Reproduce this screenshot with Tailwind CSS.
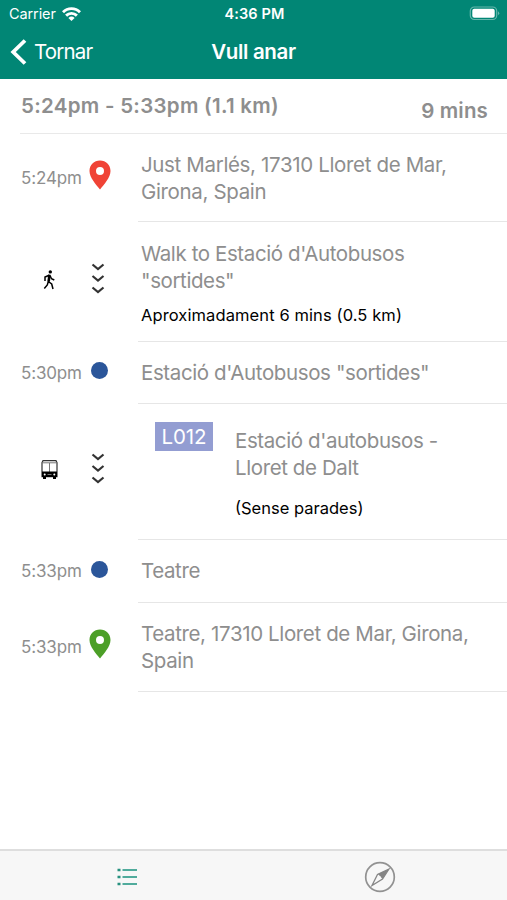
<!DOCTYPE html>
<html lang="ca">
<head>
<meta charset="utf-8">
<title>Vull anar</title>
<script src="https://cdn.jsdelivr.net/npm/@tailwindcss/browser@4"></script>
</head>
<body class="bg-white">
<svg class="hidden">
  <symbol id="pin" viewBox="0 0 22 30"><path fill-rule="evenodd" d="M11 0.5C5 .5.5 5 .5 11c0 6.500 6.500 13.500 10.500 18.500C15 24.500 21.500 17.500 21.500 11 21.500 5 17 .5 11 .5zm0 6.500a4 4 0 1 1 0 8 4 4 0 0 1 0-8z" fill="currentColor"/></symbol>
  <symbol id="down" viewBox="0 0 14 34"><path d="M1.500 2.500 7 7l5.500-4.500M1.500 14 7 18.500l5.500-4.500M1.500 25.500 7 30l5.500-4.500" fill="none" stroke="#333" stroke-width="2.200"/></symbol>
</svg>
<div class="flex h-[900px] w-[507px] flex-col overflow-hidden bg-white font-['Inter',sans-serif] text-[#8e8e8e]">
  <header class="h-[79px] shrink-0 bg-[#018675] text-white">
    <div class="grid h-[27px] grid-cols-3 items-center pl-[9px] pr-[7px] text-[14.500px] leading-[27px]">
      <div class="flex items-center gap-[6px]"><span class="tracking-[-0.1px]">Carrier</span>
        <svg class="h-[14px] w-[19px]" viewBox="0 0 19 14"><g fill="none" stroke="#fff" stroke-width="2.900"><path d="M1 5.200a12 12 0 0 1 17 0M4.100 8.600a7.700 7.700 0 0 1 10.800 0"/></g><path d="M9.500 14 6.400 10.900a4.500 4.500 0 0 1 6.200 0z" fill="#fff"/></svg>
      </div>
      <div class="text-center font-semibold tracking-[0.1px]">4:36 PM</div>
      <svg class="h-[15px] w-[31px] justify-self-end" viewBox="0 0 31 15"><rect x="1.300" y="1" width="26.400" height="12.500" rx="4" fill="none" stroke="#fff" stroke-opacity=".4" stroke-width="1.200"/><rect x="3.300" y="2.800" width="22.400" height="9" rx="2" fill="#fff"/><path d="M29 5.300q2.500 2 0 4z" fill="#fff" fill-opacity=".4"/></svg>
    </div>
    <div class="grid h-[50px] grid-cols-3 items-center pl-[10px] pr-[10px] text-[20.500px]">
      <div class="flex items-center gap-[7px]"><svg class="h-[26px] w-[17px]" viewBox="0 0 17 26"><path d="M15 1.500 3.200 13 15 24.500" fill="none" stroke="#fff" stroke-width="3.800"/></svg><span class="tracking-[-0.8px]">Tornar</span></div>
      <div class="text-center font-semibold tracking-[-0.350px]">Vull anar</div>
    </div>
  </header>
  <main class="flex-1">
    <section class="ml-[20px] flex h-[55px] justify-between border-b-[1.500px] border-[#e9e9e9] pl-px pr-[19px] text-[20.500px] font-semibold leading-[27px]">
      <div class="pt-[13px] tracking-[0.280px]">5:24pm - 5:33pm (1.1 km)</div><div class="pt-[18px] tracking-[0.150px]">9 mins</div>
    </section>
    <section class="flex h-[88px]">
      <div class="flex w-[138px] pl-[21px]"><span class="w-[68px] pt-[32px] text-[17px] leading-[24px] tracking-[-0.150px]">5:24pm</span><svg class="mt-[26px] h-[30px] w-[22px] text-[#f04336]"><use href="#pin"/></svg></div>
      <div class="flex-1 border-b-[1.500px] border-[#e6e6e6] pl-[3px] pt-[17px] text-[20.500px] leading-[27px] tracking-[-0.350px]">Just Marlés, 17310 Lloret de Mar,<br>Girona, Spain</div>
    </section>
    <section class="flex h-[120px]">
      <div class="flex w-[138px] pl-[42px]">
        <svg class="mt-[48px] h-[20px] w-[15px]" viewBox="0 0 15 20"><circle cx="8.300" cy="1.900" r="1.700"/><path d="M7.500 5 6.300 11.500 9.700 14l1.300 5M6.300 11.500l-1 3.500-3 3.500M6.500 5.500 3 7v4M8 5.500l1.500 3.200 2.800 1.300" fill="none" stroke="#000" stroke-width="1.500"/><path d="m6 4.500 2.500.2-.5 7-2.500-.3z"/></svg>
        <svg class="ml-[34px] mt-[40px] h-[34px] w-[14px]"><use href="#down"/></svg>
      </div>
      <div class="flex-1 border-b-[1.500px] border-[#e6e6e6] pl-[3px] pt-[18px] text-[20.500px] leading-[27px] tracking-[-0.400px]">Walk to Estació d'Autobusos<br>"sortides"<p class="mt-[9px] text-[16.500px] leading-[24px] tracking-[0.100px] text-black">Aproximadament 6 mins (0.5 km)</p></div>
    </section>
    <section class="flex h-[62px]">
      <div class="flex w-[138px] pl-[21px]"><span class="w-[70px] pt-[19px] text-[17px] leading-[24px] tracking-[-0.150px]">5:30pm</span><i class="mt-[20px] h-[17px] w-[17px] rounded-full bg-[#2b569a]"></i></div>
      <div class="flex-1 border-b-[1.500px] border-[#e6e6e6] pl-[3px] pt-[17px] text-[20.500px] leading-[27px] tracking-[-0.390px]">Estació d'Autobusos "sortides"</div>
    </section>
    <section class="flex h-[136px]">
      <div class="flex w-[138px] pl-[41px]">
        <svg class="mt-[56px] h-[20px] w-[17px]" viewBox="0 0 17 20"><path d="M2 .7h13l1 2v14H1v-14z" fill="#fff" stroke="#333" stroke-width="1.200"/><path d="M1 2.800h15M8.500 3v9" stroke="#777" stroke-width="1"/><path d="M1 11.500h15V17h-1v2h-3v-2H5v2H2v-2H1z"/><circle cx="3.700" cy="14.500" r="1" fill="#fff"/><circle cx="13.300" cy="14.500" r="1" fill="#fff"/><path d="M6.500 14.500h4" stroke="#777"/></svg>
        <svg class="ml-[33px] mt-[48px] h-[34px] w-[14px]"><use href="#down"/></svg>
      </div>
      <div class="flex flex-1 border-b-[1.500px] border-[#e6e6e6] pl-[17px] text-[20.500px] leading-[27px]"><span class="mt-[18px] h-[29px] w-[58px] bg-[#939dd2] text-center leading-[30px] tracking-[-0.100px] text-white">L012</span>
        <div class="pl-[22px] pt-[23px] tracking-[-0.400px]">Estació d'autobusos -<br>Lloret de Dalt<p class="mt-[15px] text-[16.500px] leading-[24px] tracking-[0px] text-black">(Sense parades)</p></div></div>
    </section>
    <section class="flex h-[63px]">
      <div class="flex w-[138px] pl-[21px]"><span class="w-[70px] pt-[19px] text-[17px] leading-[24px] tracking-[-0.150px]">5:33pm</span><i class="mt-[21px] h-[17px] w-[17px] rounded-full bg-[#2b569a]"></i></div>
      <div class="flex-1 border-b-[1.500px] border-[#e6e6e6] pl-[3px] pt-[17px] text-[20.500px] leading-[27px] tracking-[-0.400px]">Teatre</div>
    </section>
    <section class="flex h-[89px]">
      <div class="flex w-[138px] pl-[21px]"><span class="w-[68px] pt-[32px] text-[17px] leading-[24px] tracking-[-0.150px]">5:33pm</span><svg class="mt-[26px] h-[30px] w-[22px] text-[#4c9f27]"><use href="#pin"/></svg></div>
      <div class="flex-1 border-b-[1.500px] border-[#e6e6e6] pl-[3px] pt-[17px] text-[20.500px] leading-[27px] tracking-[-0.370px]">Teatre, 17310 Lloret de Mar, Girona,<br>Spain</div>
    </section>
  </main>
  <nav class="grid h-[51px] shrink-0 grid-cols-2 items-center justify-items-center border-t-2 border-[#dedede] bg-[#f7f7f7] pt-[2px]">
    <svg class="h-[18px] w-[20px]" viewBox="0 0 20 18"><path d="M0.500 2h3M0.500 9h3M0.500 16h3" stroke="#27917f" stroke-width="2.600"/><path d="M5.500 2H20M5.500 9H20M5.500 16H20" stroke="#50ab9c" stroke-width="2"/></svg>
    <svg class="h-[32px] w-[32px]" viewBox="0 0 32 32"><circle cx="16" cy="16" r="14.300" fill="none" stroke="#929292" stroke-width="1.700"/><path d="M25 8 14 13l4.500 5z" fill="#858585"/><path d="M25 8 18.500 18 8 24.500l5.500-11z" fill="none" stroke="#858585" stroke-width="1.300"/><circle cx="15.500" cy="16.500" r="1.500" fill="#f7f7f7"/></svg>
  </nav>
</div>
</body>
</html>
